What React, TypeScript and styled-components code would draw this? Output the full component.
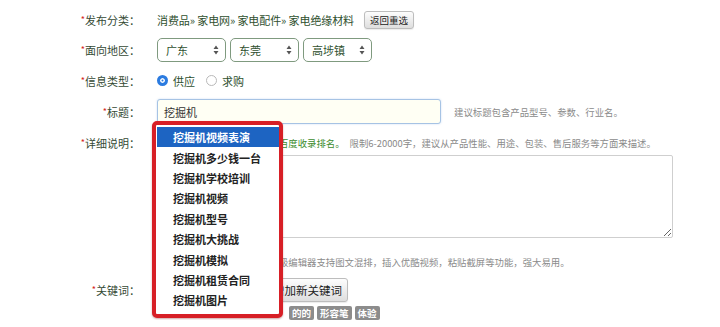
import styled, { createGlobalStyle } from "styled-components";

const GlobalStyle = createGlobalStyle`
  body {
    margin: 0;
    background: #fff;
    font-family: "Noto Sans CJK SC", "Noto Sans", sans-serif;
  }
`;

const Form = styled.div`
  padding-top: 5px;
  width: 720px;
`;

const Row = styled.div<{ $h?: number; $top?: boolean }>`
  display: grid;
  grid-template-columns: 140px 1fr;
  column-gap: 17px;
  align-items: ${(p) => (p.$top ? "start" : "center")};
  height: ${(p) => (p.$h ? p.$h + "px" : "auto")};
`;

const Label = styled.div<{ $pt?: number }>`
  text-align: right;
  font-size: 11px;
  line-height: 16px;
  color: #344a34;
  padding-top: ${(p) => p.$pt || 0}px;
`;

const Star = styled.span`
  color: #d42020;
  font-size: 9px;
  vertical-align: top;
`;

const Field = styled.div<{ $gap?: number }>`
  display: flex;
  align-items: center;
  gap: ${(p) => p.$gap || 10}px;
  font-size: 11px;
  color: #2e4f2e;
`;

const Crumbs = styled.span`
  letter-spacing: -0.1px;
`;

const GreyButton = styled.button<{ $size?: number; $h?: number }>`
  height: ${(p) => p.$h || 18}px;
  padding: 0 5px;
  font-family: inherit;
  font-size: ${(p) => p.$size || 9.5}px;
  color: #222;
  background: linear-gradient(#fdfdfd, #dedede);
  border: 1px solid #bdbdbd;
  border-radius: 3px;
  box-shadow: 0 1px 1px rgba(0, 0, 0, 0.08);
`;

const Selects = styled.div`
  display: flex;
  gap: 4px;
`;

const SelectBox = styled.div`
  box-sizing: border-box;
  width: 69px;
  height: 24px;
  padding: 0 6px 0 8px;
  display: flex;
  align-items: center;
  justify-content: space-between;
  border: 1px solid #7f9a7f;
  border-radius: 5px;
  font-size: 11px;
  color: #2e4f2e;
  background: #fff;
`;

const Radios = styled.div`
  display: flex;
  align-items: center;
  font-size: 11px;
  color: #2e4f2e;
`;

const RadioDot = styled.span<{ $on?: boolean }>`
  box-sizing: border-box;
  width: 11px;
  height: 11px;
  border-radius: 50%;
  margin-right: 5px;
  background: ${(p) => (p.$on ? "#2b7be0" : "#fff")};
  border: ${(p) => (p.$on ? "3px solid #2b7be0" : "1px solid #b9b9b9")};
  box-shadow: ${(p) => (p.$on ? "inset 0 0 0 1.5px #fff" : "none")};
  display: inline-block;
`;

const RadioText = styled.span`
  margin-right: 11px;
`;

const InputWrap = styled.div`
  position: relative;
  display: flex;
`;

const TitleInput = styled.div`
  box-sizing: border-box;
  width: 284px;
  height: 25px;
  padding-left: 6px;
  display: flex;
  align-items: center;
  font-size: 11px;
  color: #333;
  background: #fffff4;
  border: 1px solid #a6c3e4;
  border-radius: 3px;
  box-shadow: 0 0 2px rgba(90, 150, 220, 0.35);
`;

const Hint = styled.span<{ $green?: boolean }>`
  font-size: 9.4px;
  line-height: 16px;
  color: ${(p) => (p.$green ? "#3c8c2c" : "#8a8a8a")};
  white-space: nowrap;
`;

const Detail = styled.div`
  padding-top: 8px;
  display: flex;
  flex-direction: column;
`;

const HintLine = styled.div<{ $mt?: number }>`
  margin-top: ${(p) => p.$mt || 0}px;
  height: 16px;
  display: flex;
  gap: 5px;
`;

const TextArea = styled.textarea`
  box-sizing: border-box;
  margin-top: 4px;
  width: 516px;
  height: 83px;
  border: 1px solid #cfcfcf;
  border-radius: 2px;
  font-family: inherit;
`;

const KeywordRow = styled.div`
  display: flex;
  align-items: center;
  gap: 6px;
`;

const KeywordInput = styled.div`
  box-sizing: border-box;
  width: 104px;
  height: 24px;
  border: 1px solid #ccc;
  border-radius: 3px;
`;

const Tags = styled.div`
  margin-top: 4px;
  display: flex;
  gap: 3px;
  padding-left: 132px;
`;

const Tag = styled.span`
  height: 14px;
  padding: 0 3px;
  display: flex;
  align-items: center;
  font-size: 9.5px;
  font-weight: 700;
  color: #fff;
  background: #8c8c8c;
  border-radius: 2px;
`;

const Suggest = styled.div`
  position: absolute;
  left: -5px;
  top: 22px;
  box-sizing: border-box;
  width: 131px;
  height: 197px;
  border: 4px solid #d71f26;
  border-radius: 5px;
  background: #fff;
  padding: 2px 0 0 1px;
  box-shadow: 0 1px 2px rgba(120, 0, 0, 0.35);
  z-index: 10;
`;

const SuggestItem = styled.div<{ $active?: boolean }>`
  height: 20.4px;
  display: flex;
  align-items: center;
  padding-left: 16px;
  font-size: 11px;
  font-weight: 700;
  color: ${(p) => (p.$active ? "#fff" : "#222")};
  background: ${(p) => (p.$active ? "#1d64c2" : "transparent")};
`;

const Arrows = () => (
  <svg width="6" height="10" viewBox="0 0 6 10">
    <path d="M3 0.5 L5.5 4 H0.5 Z M3 9.5 L5.5 6 H0.5 Z" fill="#555" />
  </svg>
);

const suggestions = [
  "挖掘机视频表演",
  "挖掘机多少钱一台",
  "挖掘机学校培训",
  "挖掘机视频",
  "挖掘机型号",
  "挖掘机大挑战",
  "挖掘机模拟",
  "挖掘机租赁合同",
  "挖掘机图片",
];

const areas = ["广东", "东莞", "高埗镇"];

const App = () => {
  return (
    <>
      <GlobalStyle />
      <Form>
        <Row $h={30}>
          <Label>
            <Star>*</Star>发布分类：
          </Label>
          <Field>
            <Crumbs>消费品» 家电网» 家电配件» 家电绝缘材料</Crumbs>
            <GreyButton>返回重选</GreyButton>
          </Field>
        </Row>
        <Row $h={30}>
          <Label>
            <Star>*</Star>面向地区：
          </Label>
          <Selects>
            {areas.map((a) => (
              <SelectBox key={a}>
                <span>{a}</span>
                <Arrows />
              </SelectBox>
            ))}
          </Selects>
        </Row>
        <Row $h={31}>
          <Label>
            <Star>*</Star>信息类型：
          </Label>
          <Radios>
            <RadioDot $on />
            <RadioText>供应</RadioText>
            <RadioDot />
            <RadioText>求购</RadioText>
          </Radios>
        </Row>
        <Row $h={31}>
          <Label>
            <Star>*</Star>标题：
          </Label>
          <Field $gap={13}>
            <InputWrap>
              <TitleInput>挖掘机</TitleInput>
              <Suggest>
                {suggestions.map((s, i) => (
                  <SuggestItem key={s} $active={i === 0}>
                    {s}
                  </SuggestItem>
                ))}
              </Suggest>
            </InputWrap>
            <Hint>建议标题包含产品型号、参数、行业名。</Hint>
          </Field>
        </Row>
        <Row $top>
          <Label $pt={8}>
            <Star>*</Star>详细说明：
          </Label>
          <Detail>
            <HintLine>
              <Hint $green>详细说明内容越丰富越有利于百度收录排名。</Hint>
              <Hint>限制6-20000字，建议从产品性能、用途、包装、售后服务等方面来描述。</Hint>
            </HintLine>
            <TextArea />
            <HintLine $mt={16}>
              <Hint>温馨提示：点击此处切换到高级编辑器支持图文混排，插入优酷视频，粘贴截屏等功能，强大易用。</Hint>
            </HintLine>
          </Detail>
        </Row>
        <Row $h={32} style={{ paddingTop: 8, boxSizing: "border-box" }}>
          <Label>
            <Star>*</Star>关键词：
          </Label>
          <KeywordRow>
            <KeywordInput />
            <GreyButton $size={11.5} $h={24}>
              增加新关键词
            </GreyButton>
          </KeywordRow>
        </Row>
        <Row>
          <span />
          <Tags>
            <Tag>的的</Tag>
            <Tag>形容笔</Tag>
            <Tag>体验</Tag>
          </Tags>
        </Row>
      </Form>
    </>
  );
};

export default App;
